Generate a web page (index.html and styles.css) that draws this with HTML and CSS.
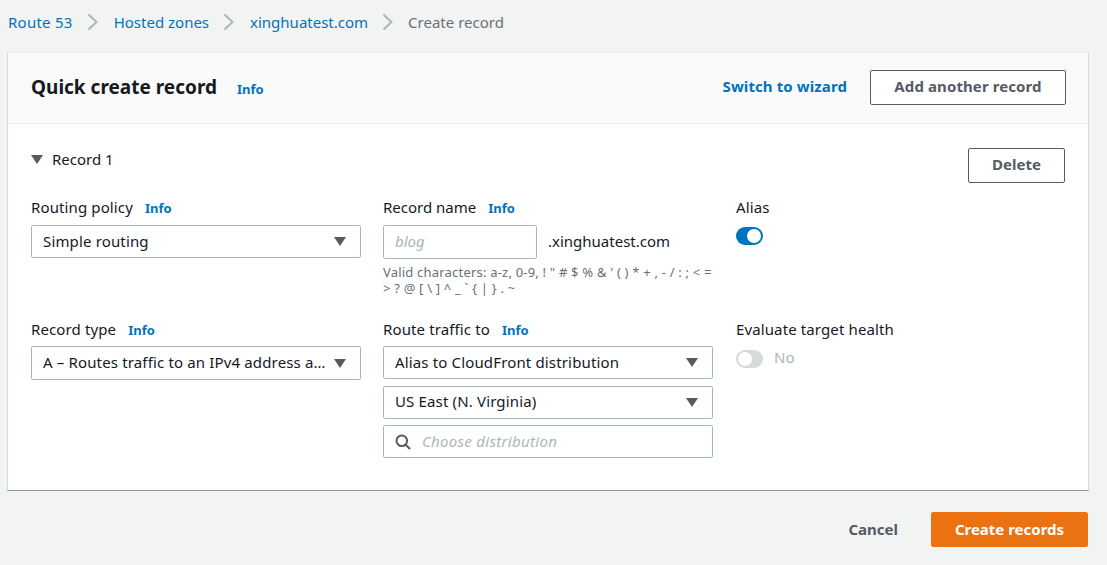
FILE: index.html
```html
<!DOCTYPE html>
<html lang="en">
<head>
<meta charset="utf-8">
<title>Quick create record</title>
<link rel="stylesheet" href="styles.css">
</head>
<body>
<nav class="crumbs">
  <a class="link root" href="#">Route 53</a>
  <svg class="sep" viewBox="0 0 12 18"><path d="M1.5 1.5 9.5 9 1.5 16.5"/></svg>
  <a class="link" href="#">Hosted zones</a>
  <svg class="sep" viewBox="0 0 12 18"><path d="M1.5 1.5 9.5 9 1.5 16.5"/></svg>
  <a class="link" href="#">xinghuatest.com</a>
  <svg class="sep" viewBox="0 0 12 18"><path d="M1.5 1.5 9.5 9 1.5 16.5"/></svg>
  <span class="current">Create record</span>
</nav>
<main class="card">
  <header class="card-head">
    <h1>Quick create record</h1>
    <a class="info head-info" href="#">Info</a>
    <a class="wizard" href="#">Switch to wizard</a>
    <button class="btn add">Add another record</button>
  </header>
  <section class="card-body">
    <div class="record-top">
      <div class="record-title"><span class="caret"></span>Record 1</div>
      <button class="btn del">Delete</button>
    </div>
    <div class="grid">
      <div class="field">
        <div class="label first">Routing policy <a class="info" href="#">Info</a></div>
        <div class="select"><span class="val">Simple routing</span><span class="caret"></span></div>
      </div>
      <div class="field">
        <div class="label first tight">Record name <a class="info" href="#">Info</a></div>
        <div class="name-row">
          <div class="input name"><span class="ph">blog</span></div>
          <span class="domain">.xinghuatest.com</span>
        </div>
        <p class="hint">Valid characters: a-z, 0-9, ! " # $ % &amp; ' ( ) * + , - / : ; &lt; = &gt; ? @ [ \ ] ^ _ ` { | } . ~</p>
      </div>
      <div class="field col3">
        <div class="label first">Alias</div>
        <div class="toggle on"><span class="knob"></span></div>
      </div>
      <div class="field">
        <div class="label">Record type <a class="info" href="#">Info</a></div>
        <div class="select tall"><span class="val">A – Routes traffic to an IPv4 address a…</span><span class="caret"></span></div>
      </div>
      <div class="field">
        <div class="label">Route traffic to <a class="info" href="#">Info</a></div>
        <div class="stack">
          <div class="select"><span class="val">Alias to CloudFront distribution</span><span class="caret"></span></div>
          <div class="select"><span class="val">US East (N. Virginia)</span><span class="caret"></span></div>
          <div class="input search">
            <svg class="mag" viewBox="0 0 16 16"><circle cx="6.8" cy="6.8" r="5.3"/><path d="M10.7 10.7 15 15"/></svg>
            <span class="ph">Choose distribution</span>
          </div>
        </div>
      </div>
      <div class="field col3">
        <div class="label">Evaluate target health</div>
        <div class="toggle-row"><div class="toggle off"><span class="knob"></span></div><span class="no">No</span></div>
      </div>
    </div>
  </section>
</main>
<footer class="actions">
  <a class="cancel" href="#">Cancel</a>
  <button class="btn primary">Create records</button>
</footer>
</body>
</html>
```
FILE: styles.css
```css
* { box-sizing: border-box; }
html, body { height: 100%; }
body {
  margin: 0;
  background: #f2f3f3;
  font-family: "Noto Sans", "Open Sans", sans-serif;
  font-size: 15px;
  line-height: 20px;
  color: #16191f;
  overflow: hidden;
}
a { text-decoration: none; color: #0073bb; }
.crumbs {
  height: 52px;
  padding: 0 0 9px 8px;
  display: flex;
  align-items: center;
}
.root { letter-spacing: .25px; }
.sep { width: 12px; height: 18px; margin: 0 15px 0 14px; fill: none; stroke: #aab7b8; stroke-width: 2; }
.current { color: #687078; margin-left: -1px; }
.card {
  margin-left: 7px;
  width: 1082px;
  height: 439px;
  background: #fff;
  border-left: 1px solid #d5dbdb;
  border-right: 1px solid #d5dbdb;
  border-bottom: 1px solid #879596;
  border-top: 1px solid #eaeded;
}
.card-head {
  height: 71px;
  background: #fafafa;
  border-bottom: 1px solid #eaeded;
  padding: 0 22px 2px 23px;
  display: flex;
  align-items: center;
}
h1 { margin: 0; font-size: 19px; font-weight: 700; line-height: 26px; }
.info { font-size: 13px; font-weight: 700; }
.head-info { margin-left: 20px; margin-top: 3px; }
.wizard { margin-left: auto; margin-right: 23px; margin-bottom: 2px; font-weight: 700; letter-spacing: .1px; }
.btn {
  font: 700 15px/20px "Noto Sans", "Open Sans", sans-serif;
  color: #545b64;
  background: #fff;
  border: 1px solid #545b64;
  border-radius: 2px;
  padding: 0 0 2px;
}
.add { width: 196px; height: 35px; letter-spacing: .1px; }
.del { width: 97px; height: 35px; padding-bottom: 4px; }
.card-body { padding: 24px 23px 0; }
.record-top { display: flex; justify-content: space-between; align-items: flex-start; height: 48px; }
.record-title { display: flex; align-items: center; gap: 9px; height: 22px; }
.caret {
  width: 0; height: 0;
  border-left: 6px solid transparent;
  border-right: 6px solid transparent;
  border-top: 9px solid #545b64;
  flex: none;
}
.grid {
  display: grid;
  grid-template-columns: 330px 330px 1fr;
  column-gap: 22px;
  grid-template-rows: 122px auto;
}
.field { min-width: 0; }
.col3 { margin-left: 1px; }
.label { height: 28px; padding-bottom: 6px; display: flex; align-items: center; gap: 8px; letter-spacing: .12px; }
.label.first { height: 29px; padding-bottom: 7px; }
.label.tight { letter-spacing: 0; }
.label .info { position: relative; top: 1px; margin-left: 4px; letter-spacing: 0; }
.select, .input {
  border: 1px solid #aab7b8;
  border-radius: 2px;
  background: #fff;
  height: 33px;
  display: flex;
  align-items: center;
  padding: 0 14px 2px 11px;
}
.select .caret, .mag { margin-top: 2px; }
.select.tall { height: 34px; }
.val { flex: 1; min-width: 0; white-space: nowrap; margin-right: 4px; letter-spacing: .15px; }
.ph { color: #aab7b8; font-style: italic; letter-spacing: .3px; }
.name-row { display: flex; align-items: center; gap: 11px; }
.name { width: 154px; height: 34px; }
.name .ph { letter-spacing: 0; }
.domain { margin-bottom: 2px; }
.hint { margin: 5px 0 0; font-size: 13px; line-height: 16px; color: #687078; letter-spacing: .2px; }
.toggle { width: 27px; height: 18px; border-radius: 9px; position: relative; margin-top: 2px; }
.toggle.on { background: #0073bb; }
.toggle.off { background: #d5dbdb; margin-top: 0; }
.knob { position: absolute; top: 2px; width: 14px; height: 14px; border-radius: 50%; background: #fff; }
.on .knob { right: 2px; }
.off .knob { left: 2px; }
.toggle-row { display: flex; align-items: center; gap: 11px; margin-top: 1px; }
.no { color: #aab7b8; margin-bottom: 4px; }
.stack { display: flex; flex-direction: column; gap: 6.5px; }
.search { gap: 11px; }
.mag { width: 16px; height: 16px; fill: none; stroke: #545b64; stroke-width: 2; flex: none; }
.actions {
  margin-top: 21px;
  width: 1088px;
  display: flex;
  justify-content: flex-end;
  align-items: center;
}
.cancel { color: #545b64; font-weight: 700; margin-right: 33px; margin-bottom: 2px; }
.primary { width: 157px; height: 35px; background: #ec7211; border: 1px solid #ec7211; color: #fff; }
```
